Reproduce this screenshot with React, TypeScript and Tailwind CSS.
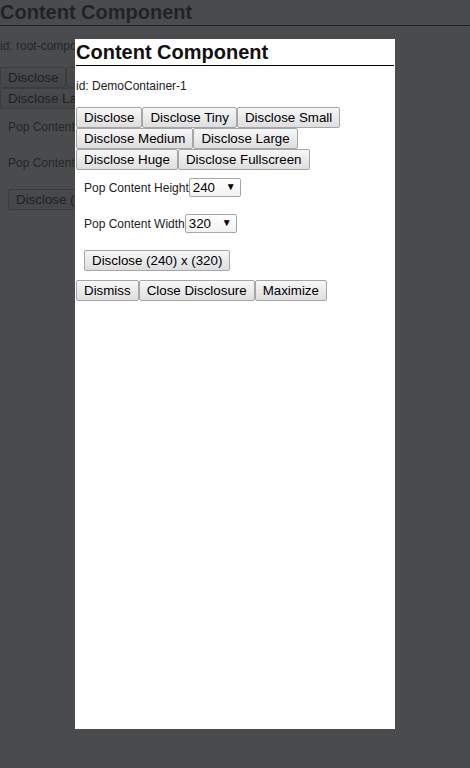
import { ReactNode } from 'react';

const FONT = "font-['Liberation_Sans',Arial,sans-serif]";

const DISCLOSE_SIZES = ['', 'Tiny', 'Small', 'Medium', 'Large', 'Huge', 'Fullscreen'];

function Btn({ children }: { children: ReactNode }) {
  return (
    <button
      type="button"
      className="h-[21px] px-[7px] border border-[#a6a6a6] rounded-[2px] bg-linear-to-b from-[#f7f7f7] to-[#dedede] text-[13.333px] leading-[19px] text-black whitespace-nowrap"
    >
      {children}
    </button>
  );
}

function SizeSelect({ label, value }: { label: string; value: string }) {
  return (
    <label className="flex items-center text-[12px] leading-[14px] text-[#222]">
      {label}
      <span className="relative inline-flex">
        <select
          defaultValue={value}
          className="appearance-none h-[19px] w-[52px] border border-[#a6a6a6] rounded-[2px] bg-linear-to-b from-white to-[#f1f1f1] pl-[3px] text-[13.333px] leading-[17px] text-black"
        >
          <option>120</option>
          <option>240</option>
          <option>320</option>
          <option>480</option>
        </select>
        <span className="pointer-events-none absolute right-[5px] top-[3px] text-[10px] leading-[12px] text-black">
          ▼
        </span>
      </span>
    </label>
  );
}

function ContentComponent({ id, disclosed }: { id: string; disclosed?: boolean }) {
  return (
    <div className={`${FONT} text-black`}>
      <div className="text-[20px] font-bold leading-[23px] pt-px pb-px border-b border-black text-[#111] whitespace-nowrap">
        Content Component
      </div>
      <div className="mt-[13px] mb-[14px] text-[12px] leading-[14px] text-[#222] whitespace-nowrap">
        id: {id}
      </div>
      <div className="flex flex-wrap">
        {DISCLOSE_SIZES.map((s) => (
          <Btn key={s}>{s ? `Disclose ${s}` : 'Disclose'}</Btn>
        ))}
      </div>
      <div className="flex flex-col items-start gap-[17px] pl-[8px] pt-[8px] pb-[9px]">
        <SizeSelect label="Pop Content Height" value="240" />
        <SizeSelect label="Pop Content Width" value="320" />
        <Btn>Disclose (240) x (320)</Btn>
      </div>
      {disclosed && (
        <div className="flex">
          <Btn>Dismiss</Btn>
          <Btn>Close Disclosure</Btn>
          <Btn>Maximize</Btn>
        </div>
      )}
    </div>
  );
}

export default function App() {
  return (
    <div className="relative h-[768px] w-[470px] overflow-hidden bg-white">
      <ContentComponent id="root-component" />

      {/* modal backdrop + disclosed pop content */}
      <div className="fixed inset-0 flex items-center justify-center bg-[rgba(36,38,40,0.83)]">
        <div className="h-[690px] w-[320px] overflow-hidden bg-white p-px">
          <ContentComponent id="DemoContainer-1" disclosed />
        </div>
      </div>
    </div>
  );
}
